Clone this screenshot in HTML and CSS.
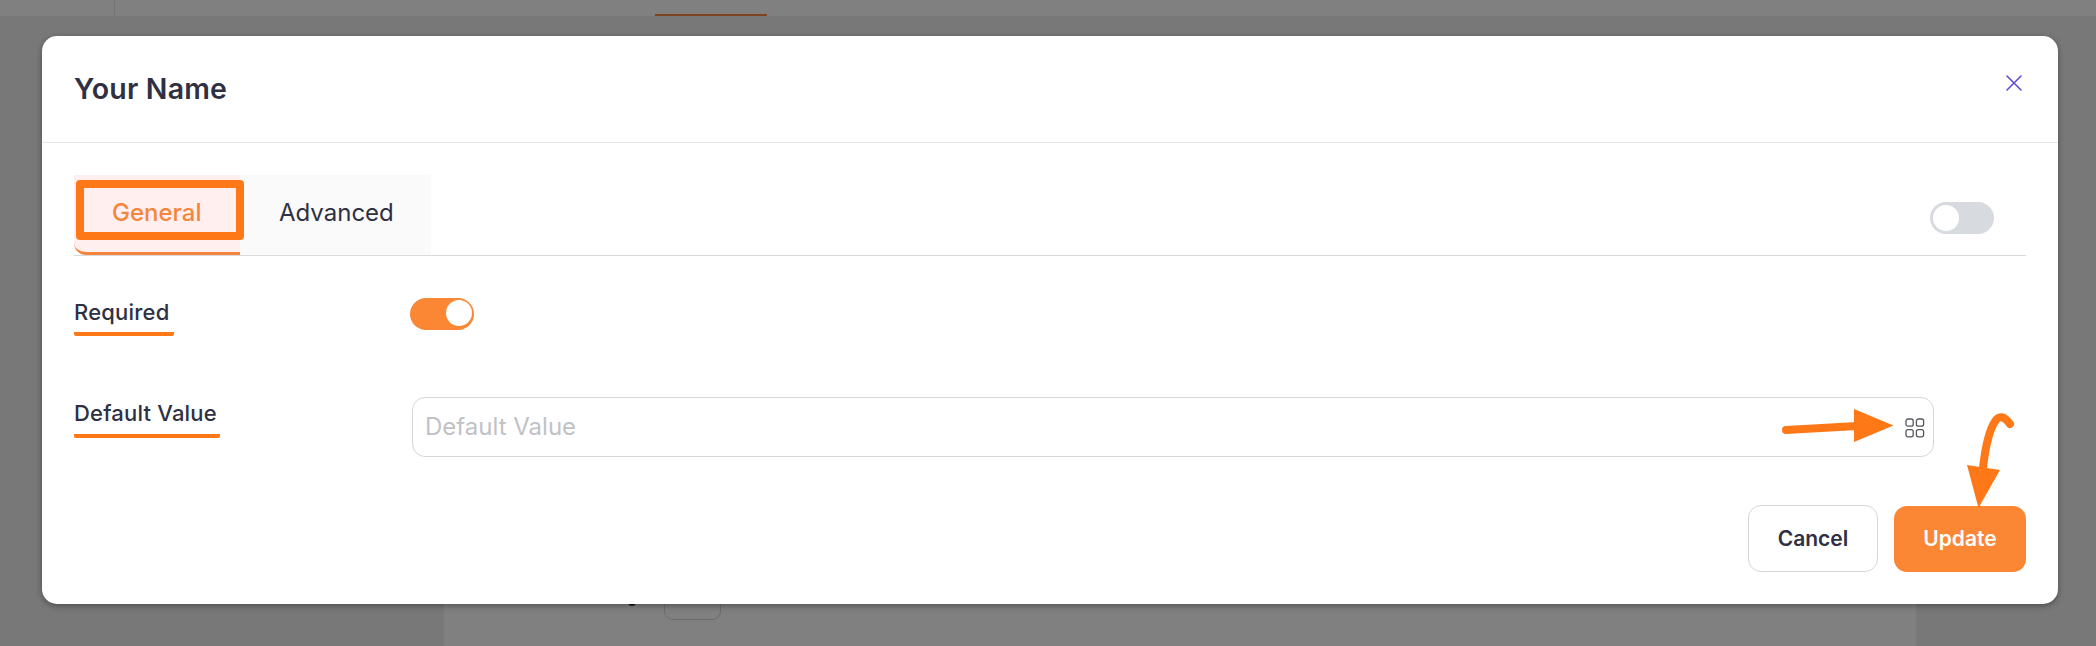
FILE: index.html
```html
<!DOCTYPE html>
<html lang="en">
<head>
<meta charset="utf-8">
<title>Your Name</title>
<link rel="stylesheet" href="styles.css">
</head>
<body>
<div class="page">
  <div class="topbar"><div class="topbar-side"></div><div class="topbar-active"></div></div>
  <div class="panel"><div class="panel-letter"></div><div class="panel-box"></div></div>
</div>
<div class="modal" role="dialog">
  <header class="modal-header">
    <h1 class="title">Your Name</h1>
    <svg class="close" viewBox="0 0 16 16"><path d="M1 1L15 15M15 1L1 15"/></svg>
  </header>
  <div class="modal-body">
    <nav class="tabs">
      <div class="tab tab-active">General<span class="tab-mark"></span></div>
      <div class="tab">Advanced</div>
      <div class="toggle toggle-off"><span class="knob"></span></div>
    </nav>
    <div class="row row-required">
      <div class="label-cell"><span class="label label-required">Required</span></div>
      <div class="toggle"><span class="knob"></span></div>
    </div>
    <div class="row row-default">
      <div class="label-cell"><span class="label label-default">Default Value</span></div>
      <div class="field">
        <span class="placeholder">Default Value</span>
        <svg class="grid-icon" viewBox="0 0 20 20"><rect x="1" y="1" width="7.2" height="7.2" rx="2"/><rect x="11.4" y="1" width="7.2" height="7.2" rx="2"/><rect x="1" y="11.6" width="7.2" height="7.2" rx="2"/><rect x="11.4" y="11.6" width="7.2" height="7.2" rx="2"/></svg>
      </div>
    </div>
    <footer class="actions">
      <button class="btn btn-cancel"><span>Cancel</span></button>
      <button class="btn btn-update"><span>Update</span></button>
    </footer>
  </div>
</div>
<svg class="arrows" viewBox="0 0 2096 646">
  <path class="stroke" d="M1786 430L1857 426"/>
  <path class="head" d="M1854 409L1893.5 425.5L1854 442Z"/>
  <path class="stroke" d="M2010 424C2004 416 1999 415 1995 421.500C1988 432 1985 450 1983 468"/>
  <path class="head" d="M1967 465L2000 470L1978.500 508Z"/>
</svg>
</body>
</html>
```
FILE: styles.css
```css
* { box-sizing: border-box; }
body {
  margin: 0;
  width: 2096px;
  height: 646px;
  overflow: hidden;
  position: relative;
  background: #787878;
  color: #2f3042;
  font-family: Inter, "Liberation Sans", sans-serif;
}
.page {
  height: 646px;
  display: flex;
  flex-direction: column;
  justify-content: space-between;
}
.topbar {
  height: 16px;
  background: #808080;
  display: flex;
  align-items: flex-end;
}
.topbar-side { width: 115px; height: 16px; border-right: 1px solid #757575; }
.topbar-active { width: 112px; height: 2px; margin-left: 540px; background: #7b4520; }
.panel {
  width: 1472px;
  height: 66px;
  margin-left: 444px;
  background: #808080;
  display: flex;
  align-items: flex-start;
}
.panel-letter { width: 8px; height: 26px; margin-left: 184px; border-radius: 0 0 4px 4px; background: #1a1a20; }
.panel-box { width: 57px; height: 40px; margin-left: 28px; border: 1px solid #6c6c6c; border-radius: 9px; }
.modal {
  position: absolute;
  left: 42px;
  top: 36px;
  width: 2016px;
  height: 568px;
  border-radius: 15px;
  background: #fff;
  box-shadow: 0 2px 6px rgba(0, 0, 0, .35);
}
.modal-header {
  height: 107px;
  padding: 0 36px 0 32px;
  border-bottom: 1px solid #e6e6e8;
  display: flex;
  justify-content: space-between;
}
.title { margin: 35px 0 0; font-size: 28.500px; line-height: 36px; font-weight: 600; letter-spacing: .2px; }
.close { width: 16px; height: 16px; margin-top: 39px; fill: none; stroke: #5f45d2; stroke-width: 1.5; stroke-linecap: round; }
.modal-body { padding: 32px 32px 0; }
.tabs { display: flex; height: 81px; border-bottom: 1px solid #d9dadd; }
.tab {
  width: 191px;
  height: 80px;
  padding-left: 39px;
  background: #fafafb;
  font-size: 24px;
  line-height: 76px;
}
.tab-active {
  position: relative;
  width: 166px;
  height: 80px;
  padding-left: 38px;
  border-bottom: 3px solid #f5853b;
  border-radius: 0 0 0 12px;
  background: #ffefee;
  color: #f5853b;
  font-weight: 500;
}
.tab-mark {
  position: absolute;
  left: 2px;
  top: 5px;
  width: 168px;
  height: 60px;
  border: 8px solid #ff7817;
  border-radius: 4px;
}
.toggle { width: 64px; height: 32px; padding: 2px 2px 2px 3px; border-radius: 16px; background: #fb8735; display: flex; justify-content: flex-end; }
.toggle-off { margin: 27px 32px 0 auto; padding-top: 3px; background: #d7dadf; justify-content: flex-start; }
.knob { width: 26px; height: 26px; border-radius: 50%; background: #fff; }
.row { display: flex; align-items: flex-start; }
.row-required { margin-top: 42px; height: 99px; }
.label-cell { width: 336px; flex: none; }
.label {
  display: block;
  height: 38px;
  font-size: 22px;
  line-height: 28px;
  font-weight: 500;
  letter-spacing: .2px;
  white-space: nowrap;
  border-radius: 2px;
  background: linear-gradient(#ff7817, #ff7817) 0 100% / 100% 4px no-repeat;
}
.label-required { width: 100px; }
.label-default { width: 146px; height: 39px; margin-top: 2px; }
.field {
  width: 1522px;
  height: 60px;
  margin-left: 2px;
  padding: 0 8px 0 12px;
  border: 1px solid #d5d6d9;
  border-radius: 13px;
  display: flex;
  align-items: center;
  justify-content: space-between;
}
.placeholder { font-size: 24px; line-height: 30px; color: #bfc2c6; }
.grid-icon { width: 20px; height: 20px; margin-top: 1px; fill: none; stroke: #55565c; stroke-width: 1.3; }
.actions { display: flex; justify-content: flex-end; gap: 16px; margin-top: 48px; align-items: flex-end; }
.btn {
  height: 66px;
  width: 132px;
  padding: 0;
  border: 0;
  border-radius: 13px;
  font: 600 21px/26px Inter, "Liberation Sans", sans-serif;
}
.btn-cancel { width: 130px; height: 67px; border: 1px solid #d5d6d9; background: #fff; color: #2f3042; }
.btn-update { background: #fb8735; color: #fff; }
.arrows { position: absolute; left: 0; top: 0; width: 2096px; height: 646px; }
.stroke { fill: none; stroke: #ff7817; stroke-width: 8; stroke-linecap: round; }
.head { fill: #ff7817; }
```
